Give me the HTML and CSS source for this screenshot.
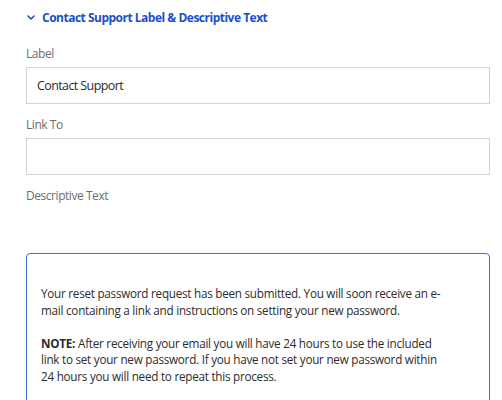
FILE: index.html
```html
<!DOCTYPE html>
<html lang="en">
<head>
    <meta charset="UTF-8">
    <title>Contact Support Settings</title>
    <link rel="stylesheet" href="styles.css">
</head>
<body>
    <div class="panel">
        <div class="section-head">
            <svg class="chevron" width="8" height="5" viewBox="0 0 8 5">
                <path d="M1 1 L4 4 L7 1" fill="none" stroke="#1b4fc7" stroke-width="1.6" stroke-linecap="round" stroke-linejoin="round"/>
            </svg>
            <span>Contact Support Label &amp; Descriptive Text</span>
        </div>

        <div class="field first">
            <div class="field-label">Label</div>
            <div class="field-input">Contact Support</div>
        </div>

        <div class="field">
            <div class="field-label">Link To</div>
            <div class="field-input"></div>
        </div>

        <div class="field">
            <div class="field-label">Descriptive Text</div>
            <div class="editor">
                <p>Your reset password request has been submitted. You will soon receive an e-mail containing a link and instructions on setting your new password.</p>
                <p><b>NOTE:</b> After receiving your email you will have 24 hours to use the included link to set your new password. If you have not set your new password within 24 hours you will need to repeat this process.</p>
            </div>
        </div>
    </div>
</body>
</html>
```

FILE: styles.css
```css
body, html {
    margin: 0;
    padding: 0;
    background-color: #ffffff;
    font-family: 'Open Sans', 'Noto Sans', sans-serif;
    overflow: hidden;
}
.panel {
    padding: 8px 12px 0 26px;
}
.section-head {
    display: flex;
    align-items: center;
    height: 18px;
    color: #1b4fc7;
    font-size: 12px;
    font-weight: bold;
    letter-spacing: -0.5px;
}
.chevron {
    margin: 0 7px 0 1px;
}
.field {
    margin-top: 13px;
}
.field.first {
    margin-top: 20px;
}
.field-label {
    color: #6e6e6e;
    font-size: 12px;
    line-height: 16px;
    letter-spacing: -0.45px;
    margin-bottom: 5px;
}
.field-input {
    box-sizing: border-box;
    height: 37px;
    border: 1px solid #d3d3d3;
    padding: 0 10px;
    font-size: 12.5px;
    line-height: 35px;
    letter-spacing: -0.6px;
    color: #2c2c2c;
}
.editor {
    box-sizing: border-box;
    height: 200px;
    margin-top: 49px;
    border: 1.5px solid #3b73d6;
    border-radius: 4px;
    padding: 31px 40px 0 14px;
    color: #2c2c2c;
    font-size: 11.7px;
    line-height: 16.5px;
    letter-spacing: -0.25px;
}
.editor p {
    margin: 0 0 16.5px;
}
```
